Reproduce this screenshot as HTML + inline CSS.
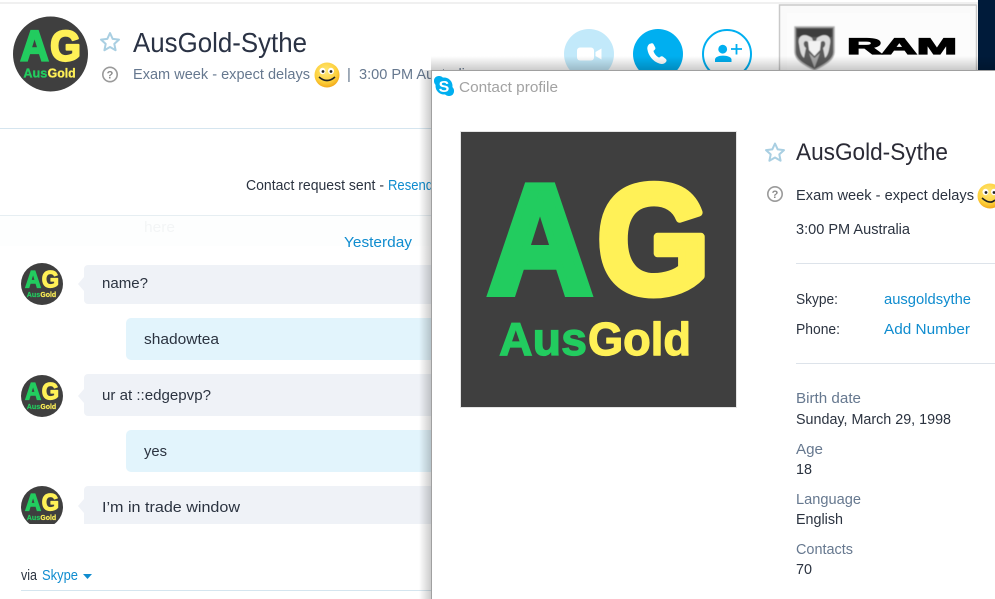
<!DOCTYPE html>
<html lang="en">
<head>
<meta charset="utf-8">
<title>AusGold-Sythe</title>
<style>
html,body{margin:0;padding:0;background:#fff;width:995px;height:599px;overflow:hidden}
svg.page{display:block;position:absolute;left:0;top:0}
text{font-family:"Liberation Sans",Arial,sans-serif}
.d{font-size:15px;fill:#2b3340}
.s{font-size:15px;fill:#66788f}
.l{font-size:15px;fill:#0f8ccf}
.b{font-weight:bold}
.lg{fill:#22cc5f;stroke:#22cc5f;stroke-linejoin:miter}
.ly{fill:#fff157;stroke:#fff157;stroke-linejoin:round}
.big{font-size:155px;stroke-width:8px}
.sm{font-size:46px;stroke-width:1.2px}
</style>
</head>
<body>
<svg class="page" width="995" height="599" viewBox="0 0 995 599" xmlns="http://www.w3.org/2000/svg">
<defs>
<filter id="bl" x="-10%" y="-10%" width="120%" height="120%"><feGaussianBlur stdDeviation=".5"/></filter>
<clipPath id="c1"><circle cx="50.5" cy="54" r="37.5"/></clipPath>
<clipPath id="c2"><circle cx="42" cy="284" r="21"/></clipPath>
<clipPath id="c3"><circle cx="42" cy="396" r="21"/></clipPath>
<clipPath id="c4"><rect x="0" y="460" width="431" height="64"/></clipPath>
<radialGradient id="sm" cx="45%" cy="35%" r="70%"><stop offset="0" stop-color="#ffe97a"/><stop offset=".65" stop-color="#fdcf3a"/><stop offset="1" stop-color="#f0a012"/></radialGradient>
<linearGradient id="shl" x1="0" y1="0" x2="1" y2="0"><stop offset="0" stop-color="#000" stop-opacity="0"/><stop offset="1" stop-color="#000" stop-opacity=".2"/></linearGradient>
<linearGradient id="sht" x1="0" y1="0" x2="0" y2="1"><stop offset="0" stop-color="#000" stop-opacity="0"/><stop offset="1" stop-color="#000" stop-opacity=".2"/></linearGradient>
</defs>

<rect width="995" height="599" fill="#fff"/>
<rect x="0" y="2" width="978" height="2" fill="#f0f0f0"/>

<!-- header avatar -->
<g clip-path="url(#c1)">
<svg x="13" y="16.5" width="75" height="75" viewBox="0 0 275 275">
<rect width="275" height="275" fill="#3f3f3f"/>
<text x="27" y="161" class="b lg big" textLength="104" lengthAdjust="spacingAndGlyphs">A</text>
<text x="136" y="161" class="b ly big" textLength="113" lengthAdjust="spacingAndGlyphs">G</text>
<text x="38" y="223" class="b lg sm" textLength="88" lengthAdjust="spacingAndGlyphs">Aus</text>
<text x="127" y="223" class="b ly sm" textLength="103" lengthAdjust="spacingAndGlyphs">Gold</text>
</svg>
</g>

<path d="M110 33l2.700 5.900 6.300.7-4.700 4.300 1.300 6.300-5.600-3.200-5.600 3.200 1.300-6.300-4.700-4.300 6.300-.7z" fill="none" stroke="#a9cfe2" stroke-width="2" stroke-linejoin="round"/>
<text x="133" y="52" font-size="28" fill="#2a3244" textLength="174" lengthAdjust="spacingAndGlyphs">AusGold-Sythe</text>
<circle cx="110" cy="74.500" r="7.200" fill="none" stroke="#9a9a9a" stroke-width="1.600"/>
<text x="110" y="78.500" font-size="11" fill="#8a8a8a" text-anchor="middle" class="b">?</text>
<text x="133" y="79" class="s" font-size="14.5" textLength="177" lengthAdjust="spacingAndGlyphs">Exam week - expect delays</text>
<circle cx="327" cy="75" r="12.5" fill="url(#sm)"/>
<ellipse cx="322.5" cy="71" rx="3" ry="3.2" fill="#fff"/><ellipse cx="331" cy="71" rx="3" ry="3.2" fill="#fff"/>
<circle cx="323" cy="71.5" r="1.4" fill="#222"/><circle cx="331" cy="71.5" r="1.4" fill="#222"/>
<path d="M319 77q8 7 16 0" fill="none" stroke="#222" stroke-width="1.6"/>
<text x="347" y="79" class="s">|</text>
<text x="359" y="79" class="s" textLength="114" lengthAdjust="spacingAndGlyphs">3:00 PM Australia</text>

<!-- call buttons -->
<circle cx="589" cy="54" r="25" fill="#c2e9fa"/>
<rect x="577" y="47.5" width="17" height="13" rx="3" fill="#fff"/>
<path d="M595.5 52l6-3.5v11l-6-3.5z" fill="#fff"/>
<circle cx="658" cy="54" r="25" fill="#00aff0"/>
<path transform="translate(658 54) scale(1.06) translate(-658 -54)" d="M650.5 44.5c1.3-.9 2.6-.8 3.3.3l1.500 2.800c.5 1 .3 1.900-.6 2.600l-1 .9c.8 2.800 2.600 5 5.300 6.300l1.200-.8c.9-.6 1.800-.6 2.600 0l2.500 2c1 .8 1 2 .2 3-1.500 1.800-3.600 2.300-6 1.500-6.500-2.300-10.500-7.500-11.500-13.500-.4-2.500.8-4.500 2.500-5.400z" fill="#fff"/>
<circle cx="727" cy="54" r="24" fill="none" stroke="#00aff0" stroke-width="2"/>
<circle cx="722.700" cy="49.200" r="4.400" fill="#00aff0"/>
<path d="M715 62v-2.500c0-2.300 3.500-3.900 8-3.900s8.500 1.600 8.500 3.900V62z" fill="#00aff0"/>
<path d="M736.500 44v10.500M731 49h11" stroke="#00aff0" stroke-width="1.800" fill="none"/>

<!-- ad -->
<rect x="779.500" y="5" width="197" height="70" fill="#fafafa" stroke="#c9c9c9" stroke-width="1.500"/>
<rect x="787" y="13" width="183" height="60" fill="#fcfcfc"/>
<g filter="url(#bl)">
<path d="M795 27H834V52C834 60 824 65 814.500 70 805 65 795 60 795 52Z" fill="#5a5a5a" stroke="#b0b0b0" stroke-width="1.500"/>
<path d="M797 29H832V37H797Z" fill="#3c3c3c"/>
<path d="M799 44C797 36 804 32 812 38L814 44 806 41C803 41 803 46 806 48L804 58C800 54 800 49 799 44Z" fill="#dcdcdc"/>
<path d="M830 44C832 36 825 32 817 38L815 44 823 41C826 41 826 46 823 48L825 58C829 54 829 49 830 44Z" fill="#dcdcdc"/>
<path d="M808 41H821L820 50 814.500 56 809 50Z" fill="#f2f2f2"/>
<path d="M809 53L814.500 68 820 53 814.500 58Z" fill="#a8a8a8"/>
</g>
<text x="847" y="54" font-size="22" class="b" fill="#000" stroke="#000" stroke-width="1.300" textLength="110" lengthAdjust="spacingAndGlyphs">RAM</text>
<rect x="978" y="0" width="17" height="70" fill="#001b3a"/>

<!-- header divider -->
<rect x="0" y="128" width="431" height="1" fill="#d5e5ef"/>

<text x="246" y="190" class="d" font-size="14" textLength="138" lengthAdjust="spacingAndGlyphs">Contact request sent -</text>
<text x="388" y="190" class="l" font-size="14" textLength="45" lengthAdjust="spacingAndGlyphs">Resend</text>
<rect x="0" y="215" width="431" height="1" fill="#e6eef2"/>
<rect x="0" y="216" width="431" height="30" fill="#fdfefe"/>
<text x="144" y="232" font-size="15" fill="#f3f5f6" textLength="31" lengthAdjust="spacingAndGlyphs">here</text>
<text x="344" y="247" class="l" textLength="68" lengthAdjust="spacingAndGlyphs">Yesterday</text>

<!-- messages -->
<path d="M88 265H431V304H88a4 4 0 0 1-4-4V291l-6-7 6-7V269a4 4 0 0 1 4-4z" fill="#eff2f7"/>
<g clip-path="url(#c2)"><svg x="21" y="263" width="42" height="42" viewBox="0 0 275 275"><rect width="275" height="275" fill="#3f3f3f"/><text x="27" y="161" class="b lg big" textLength="104" lengthAdjust="spacingAndGlyphs">A</text><text x="136" y="161" class="b ly big" textLength="113" lengthAdjust="spacingAndGlyphs">G</text><text x="38" y="223" class="b lg sm" textLength="88" lengthAdjust="spacingAndGlyphs">Aus</text><text x="127" y="223" class="b ly sm" textLength="103" lengthAdjust="spacingAndGlyphs">Gold</text></svg></g>
<text x="102" y="288" class="d" textLength="46" lengthAdjust="spacingAndGlyphs">name?</text>

<path d="M131 318H431V360H131a5 5 0 0 1-5-5V323a5 5 0 0 1 5-5z" fill="#e2f4fc"/>
<text x="144" y="344" class="d" textLength="75" lengthAdjust="spacingAndGlyphs">shadowtea</text>

<path d="M88 374H431V416H88a4 4 0 0 1-4-4V403l-6-7 6-7V378a4 4 0 0 1 4-4z" fill="#eff2f7"/>
<g clip-path="url(#c3)"><svg x="21" y="375" width="42" height="42" viewBox="0 0 275 275"><rect width="275" height="275" fill="#3f3f3f"/><text x="27" y="161" class="b lg big" textLength="104" lengthAdjust="spacingAndGlyphs">A</text><text x="136" y="161" class="b ly big" textLength="113" lengthAdjust="spacingAndGlyphs">G</text><text x="38" y="223" class="b lg sm" textLength="88" lengthAdjust="spacingAndGlyphs">Aus</text><text x="127" y="223" class="b ly sm" textLength="103" lengthAdjust="spacingAndGlyphs">Gold</text></svg></g>
<text x="102" y="400" class="d" textLength="109" lengthAdjust="spacingAndGlyphs">ur at ::edgepvp?</text>

<path d="M131 430H431V472H131a5 5 0 0 1-5-5V435a5 5 0 0 1 5-5z" fill="#e2f4fc"/>
<text x="144" y="456" class="d" textLength="23" lengthAdjust="spacingAndGlyphs">yes</text>

<path d="M88 486H431V524H84V513l-6-7 6-7V490a4 4 0 0 1 4-4z" fill="#eff2f7"/>
<g clip-path="url(#c4)"><svg x="21" y="486" width="42" height="42" viewBox="0 0 275 275"><defs><clipPath id="c5"><circle cx="137.500" cy="137.500" r="137.500"/></clipPath></defs><g clip-path="url(#c5)"><rect width="275" height="275" fill="#3f3f3f"/><text x="27" y="161" class="b lg big" textLength="104" lengthAdjust="spacingAndGlyphs">A</text><text x="136" y="161" class="b ly big" textLength="113" lengthAdjust="spacingAndGlyphs">G</text><text x="38" y="223" class="b lg sm" textLength="88" lengthAdjust="spacingAndGlyphs">Aus</text><text x="127" y="223" class="b ly sm" textLength="103" lengthAdjust="spacingAndGlyphs">Gold</text></g></svg></g>
<text x="102" y="512" class="d" textLength="138" lengthAdjust="spacingAndGlyphs">I’m in trade window</text>

<text x="21" y="580" class="d" font-size="13" textLength="16" lengthAdjust="spacingAndGlyphs">via</text>
<text x="42" y="580" class="l" font-size="13" textLength="36" lengthAdjust="spacingAndGlyphs">Skype</text>
<path d="M83 574h9l-4.500 5z" fill="#0f8ccf"/>
<rect x="21" y="590" width="410" height="1" fill="#d5e5ef"/>

<!-- popup shadow -->
<rect x="419" y="70" width="12" height="529" fill="url(#shl)"/>
<rect x="431" y="56" width="564" height="14" fill="url(#sht)"/>
<!-- popup -->
<rect x="431" y="70" width="564" height="529" fill="#fff"/>
<rect x="431" y="70" width="564" height="1" fill="#a0a0a0"/>
<rect x="431" y="70" width="1" height="529" fill="#a0a0a0"/>

<circle cx="444" cy="86" r="8.500" fill="#00aff0"/>
<rect x="434" y="76" width="10" height="10" rx="4.500" fill="#00aff0"/>
<rect x="444" y="86" width="10" height="10" rx="4.500" fill="#00aff0"/>
<text x="444" y="92" font-size="16" class="b" fill="#fff" text-anchor="middle">S</text>
<text x="459" y="92" font-size="14.500" fill="#a2a2a2" textLength="99" lengthAdjust="spacingAndGlyphs">Contact profile</text>

<!-- big logo -->
<rect x="460.500" y="131.500" width="276" height="276" fill="none" stroke="#e4e4e4"/>
<svg x="461" y="132" width="275" height="275" viewBox="0 0 275 275">
<rect width="275" height="275" fill="#3f3f3f"/>
<text x="27" y="161" class="b lg big" textLength="104" lengthAdjust="spacingAndGlyphs">A</text>
<text x="136" y="161" class="b ly big" textLength="113" lengthAdjust="spacingAndGlyphs">G</text>
<text x="38" y="223" class="b lg sm" textLength="88" lengthAdjust="spacingAndGlyphs">Aus</text>
<text x="127" y="223" class="b ly sm" textLength="103" lengthAdjust="spacingAndGlyphs">Gold</text>
</svg>

<path d="M775 143.500l2.700 5.900 6.300.7-4.700 4.300 1.300 6.300-5.600-3.200-5.600 3.200 1.300-6.300-4.700-4.300 6.300-.7z" fill="none" stroke="#a9cfe2" stroke-width="2" stroke-linejoin="round"/>
<text x="796" y="160" font-size="24" fill="#2a2a35" textLength="152" lengthAdjust="spacingAndGlyphs">AusGold-Sythe</text>
<circle cx="775" cy="194" r="7.200" fill="none" stroke="#9a9a9a" stroke-width="1.600"/>
<text x="775" y="198" font-size="11" fill="#8a8a8a" text-anchor="middle" class="b">?</text>
<text x="796" y="200" class="d" font-size="14.500" textLength="178" lengthAdjust="spacingAndGlyphs">Exam week - expect delays</text>
<circle cx="990" cy="196" r="12.500" fill="url(#sm)"/>
<ellipse cx="985.500" cy="192" rx="3" ry="3.200" fill="#fff"/><ellipse cx="994" cy="192" rx="3" ry="3.200" fill="#fff"/>
<circle cx="986" cy="192.500" r="1.400" fill="#222"/><circle cx="994" cy="192.500" r="1.400" fill="#222"/>
<path d="M982 198q8 7 13 2" fill="none" stroke="#222" stroke-width="1.600"/>
<text x="796" y="234" class="d" font-size="14.500" textLength="114" lengthAdjust="spacingAndGlyphs">3:00 PM Australia</text>
<rect x="796" y="263" width="199" height="1" fill="#dde3ea"/>
<text x="796" y="304" class="d" font-size="14.500" textLength="42" lengthAdjust="spacingAndGlyphs">Skype:</text>
<text x="884" y="304" class="l" font-size="14.500" textLength="87" lengthAdjust="spacingAndGlyphs">ausgoldsythe</text>
<text x="796" y="334" class="d" font-size="14.500" textLength="44" lengthAdjust="spacingAndGlyphs">Phone:</text>
<text x="884" y="334" class="l" font-size="14.500" textLength="86" lengthAdjust="spacingAndGlyphs">Add Number</text>
<rect x="796" y="363" width="199" height="1" fill="#dde3ea"/>
<text x="796" y="403" class="s" font-size="14.500" textLength="65" lengthAdjust="spacingAndGlyphs">Birth date</text>
<text x="796" y="424" class="d" font-size="14.500" textLength="155" lengthAdjust="spacingAndGlyphs">Sunday, March 29, 1998</text>
<text x="796" y="454" class="s" font-size="14.500" textLength="27" lengthAdjust="spacingAndGlyphs">Age</text>
<text x="796" y="474" class="d" font-size="14.500" textLength="16" lengthAdjust="spacingAndGlyphs">18</text>
<text x="796" y="504" class="s" font-size="14.500" textLength="65" lengthAdjust="spacingAndGlyphs">Language</text>
<text x="796" y="524" class="d" font-size="14.500" textLength="47" lengthAdjust="spacingAndGlyphs">English</text>
<text x="796" y="554" class="s" font-size="14.500" textLength="57" lengthAdjust="spacingAndGlyphs">Contacts</text>
<text x="796" y="574" class="d" font-size="14.500" textLength="16" lengthAdjust="spacingAndGlyphs">70</text>
</svg>
</body>
</html>
